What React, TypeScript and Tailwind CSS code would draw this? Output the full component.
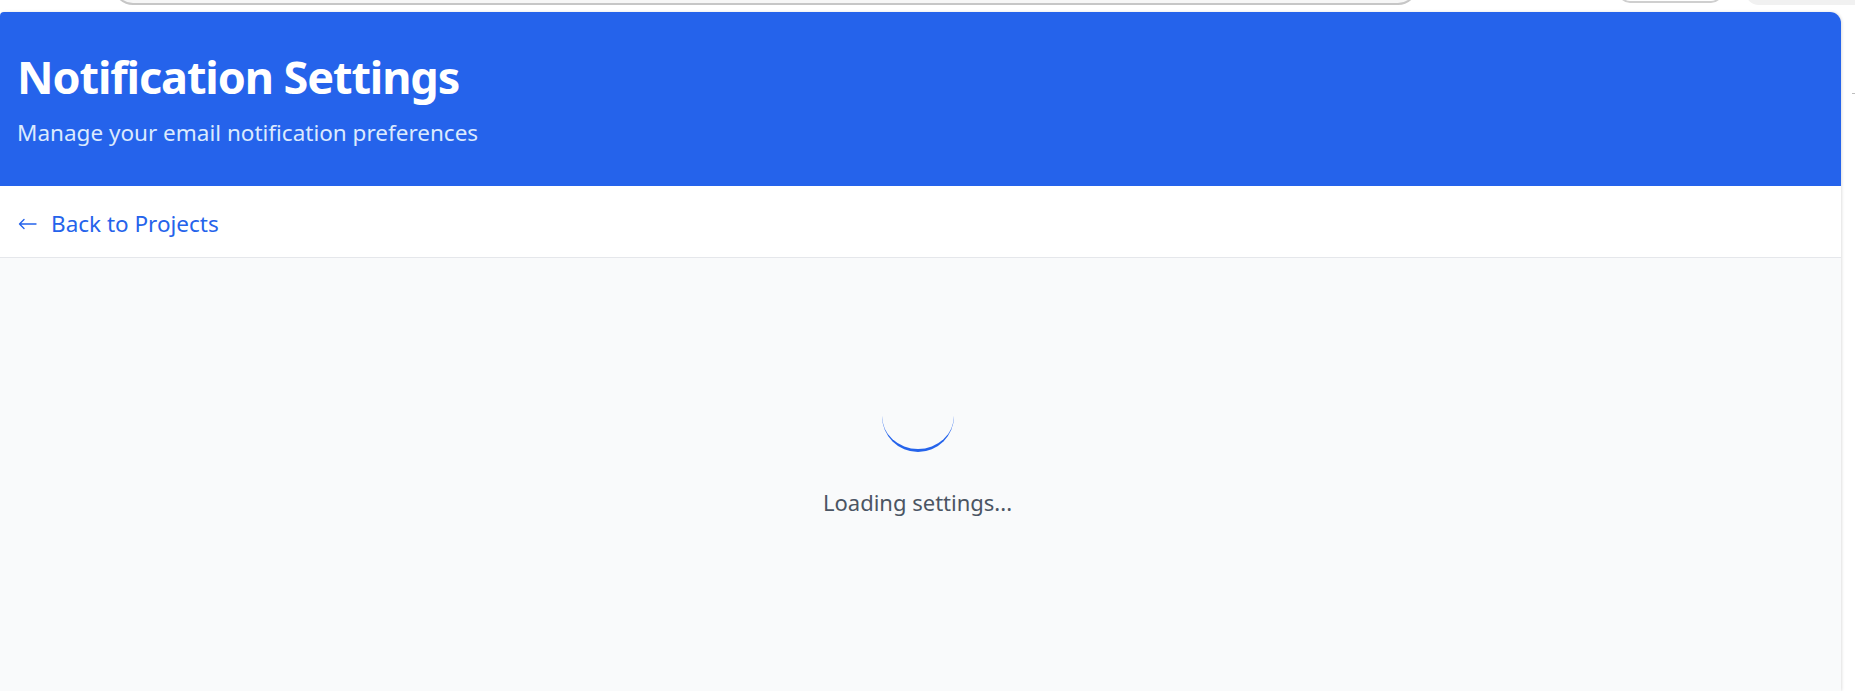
import React from "react";

export default function App() {
  return (
    <div
      className="w-[1855px] h-[691px] overflow-hidden bg-white"
      style={{ fontFamily: '"Noto Sans", "Open Sans", sans-serif' }}
    >
      {/* partially visible controls above the card */}
      <div className="flex h-[12px] items-start overflow-visible">
        <div className="ml-[113px] mt-[-35px] h-[40px] w-[1305px] rounded-b-[20px] border-2 border-[#c6c6c6] bg-[#f6f6f6]" />
        <div className="ml-[200px] mt-[-37px] h-[40px] w-[105px] rounded-b-[12px] border-2 border-[#cfcfcf] bg-white" />
        <div className="ml-[22px] mt-[-35px] h-[40px] flex-1 rounded-bl-[14px] bg-[#f1f1f1]" />
      </div>

      <div className="flex">
        <div className="w-[1841px] rounded-tl-[4px] rounded-tr-[11px] overflow-hidden shadow-[1px_0_3px_rgba(0,0,0,0.12)]">
          {/* header */}
          <div className="h-[174px] bg-[#2563eb] pl-[17px] pt-[40px]">
            <h1 className="text-[45px] font-bold leading-[50px] tracking-[-1.1px] text-white">
              Notification Settings
            </h1>
            <p className="mt-[16px] text-[22.5px] leading-[30px] text-[#dbeafe]">
              Manage your email notification preferences
            </p>
          </div>

          {/* nav */}
          <div className="flex h-[72px] items-center border-b border-[#e5e7eb] bg-white pl-[18px] pt-[3px] shadow-[0_1px_2px_rgba(0,0,0,0.05)]">
            <svg width="19" height="12" viewBox="0 0 19 12" className="mr-[14px] mt-[2px]" fill="none">
              <path d="M18 6H1.5M6 1.5L1.5 6L6 10.5" stroke="#2563eb" strokeWidth="1.4" strokeLinecap="round" strokeLinejoin="round" />
            </svg>
            <span className="text-[22.5px] leading-[35px] text-[#2563eb]">
              Back to Projects
            </span>
          </div>

          {/* content */}
          <div className="flex h-[433px] flex-col items-center bg-[#f9fafb] pr-[6px] pt-[122px]">
            <div className="h-[72px] w-[72px] rounded-full border-b-[3px] border-[#2563eb]" />
            <p className="mt-[33px] text-[22px] leading-[35px] text-[#4b5563]">
              Loading settings...
            </p>
          </div>
        </div>
        <div className="flex-1 pt-[81px]">
          <div className="ml-auto h-px w-[3px] bg-[#bdbdbd]" />
        </div>
      </div>
    </div>
  );
}
